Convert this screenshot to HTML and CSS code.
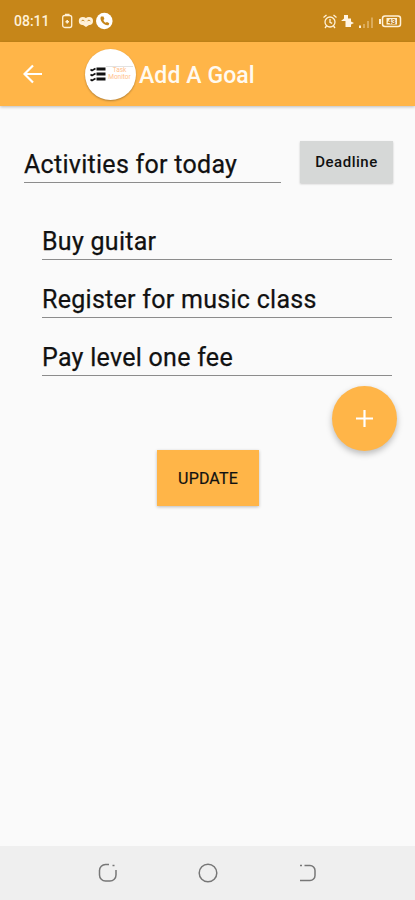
FILE: index.html
```
<!DOCTYPE html>
<html lang="en">
<head>
  <meta charset="UTF-8">
  <meta name="viewport" content="width=device-width, initial-scale=1.0">
  <title>Add A Goal</title>
  <link rel="stylesheet" href="styles.css">
</head>
<body>
  <div class="statusbar">
    <span class="clock">08:11</span>
    <svg class="status-left" width="54" height="20" viewBox="0 0 54 20">
      <rect x="2.700" y="4.500" width="9" height="12" rx="2" fill="none" stroke="#fff1d8" stroke-width="1.300"/>
      <path d="M5 3.500h4.500M7.200 9v3.500M5.500 10.700h3.500" stroke="#fff1d8" stroke-width="1.600"/>
      <circle cx="22.800" cy="10" r="4" fill="#fff1d8"/>
      <circle cx="29" cy="10" r="4" fill="#fff1d8"/>
      <path d="M20 12l6 4 6-4z" fill="#fff1d8"/>
      <path d="M21.500 10.200a1.500 1.500 0 0 1 2.800 0M27.500 10.200a1.500 1.500 0 0 1 2.800 0" fill="none" stroke="#c68619" stroke-width="1"/>
      <circle cx="44.300" cy="10" r="8.300" fill="#fff"/>
      <path d="M41 5.500c-2.200 3 2.700 9.500 7.500 8.700l.8-1.900-2.300-1.300-1.400.8c-1-.6-1.900-1.700-2.200-2.900l1-1-.9-2.400z" fill="#c68619"/>
    </svg>
    <svg class="status-right" width="84" height="20" viewBox="0 0 84 20">
      <g fill="none" stroke="#fff1d8" stroke-width="1.300">
        <circle cx="10" cy="11" r="5"/>
        <path d="M10 8v3.300l2.200 1M3.500 6.500l3-2.500M16.500 6.500l-3-2.500M6.500 15l-1.500 2M13.500 15l1.500 2"/>
      </g>
      <path d="M24 4h4v3.500h3v3l3 1.500-3 1.500V16h-5.500v-6H21l3-2.500z" fill="#fff5e5"/>
      <path d="M40 17v-2.500" stroke="#fff1d8" stroke-width="2"/>
      <path d="M44 17v-4M48 17v-7M52 17V6.500" stroke="#dbab5b" stroke-width="2"/>
      <rect x="62.500" y="5" width="18" height="10.500" rx="2.500" fill="none" stroke="#fff1d8" stroke-width="1.500"/>
      <path d="M60 8v5" stroke="#fff1d8" stroke-width="2"/>
      <rect x="66.500" y="7" width="10.500" height="6.500" fill="#fff1d8"/>
      <text x="71.700" y="13" text-anchor="middle" class="battery">43</text>
    </svg>
  </div>

  <header class="appbar">
    <svg class="back" width="20" height="20" viewBox="0 0 20 20">
      <path d="M19 10H2M10 1.500L1.500 10l8.500 8.500" fill="none" stroke="#fff" stroke-width="2.200"/>
    </svg>
    <div class="logo">
      <svg width="16" height="16" viewBox="0 0 16 16">
        <path d="M6.500 3h9M6.500 8h9M6.500 13h9" stroke="#111" stroke-width="3"/>
        <path d="M.5 3.500l1.500 1L5.500 2.500M.5 8.500l1.500 1L5.500 7.500M.5 13.500l1.500 1L5.500 12.500" fill="none" stroke="#111" stroke-width="1.600"/>
      </svg>
      <span class="logo-text">Task<br>Monitor</span>
    </div>
    <h1>Add A Goal</h1>
  </header>

  <main>
    <div class="goal-row">
      <div class="field title">Activities for today</div>
      <button class="deadline">Deadline</button>
    </div>

    <div class="activities">
      <div class="field">Buy guitar</div>
      <div class="field">Register for music class</div>
      <div class="field">Pay level one fee</div>
    </div>

    <button class="fab" aria-label="Add">
      <svg width="17" height="17" viewBox="0 0 17 17">
        <path d="M8.500 0v17M0 8.500h17" stroke="#fff" stroke-width="2.200"/>
      </svg>
    </button>
    <button class="update">UPDATE</button>
  </main>

  <nav class="navbar">
    <svg width="20" height="20" viewBox="0 0 20 20">
      <path d="M11 1.500H7.500A6 6 0 0 0 1.500 7.500v4.500A6 6 0 0 0 7.500 18h4.500a6 6 0 0 0 6-6V7M14.500 2.500h2"/>
    </svg>
    <svg width="20" height="20" viewBox="0 0 20 20">
      <circle cx="10" cy="10" r="8.800"/>
    </svg>
    <svg width="20" height="20" viewBox="0 0 20 20">
      <path d="M6.500 2.500H12a5 5 0 0 1 5 5v5a5 5 0 0 1-5 5H2M2 2.500h2"/>
    </svg>
  </nav>
</body>
</html>
```

FILE: styles.css
```
* {
  box-sizing: border-box;
}
body {
  margin: 0;
  height: 900px;
  display: flex;
  flex-direction: column;
  overflow: hidden;
  background: #fafafa;
  color: #111;
  font-family: Roboto, sans-serif;
}
button {
  border: 0;
  padding: 0;
  color: #111;
  font-family: inherit;
}
.statusbar {
  height: 42px;
  padding: 0 11px 0 14px;
  display: flex;
  align-items: center;
  background: #c68619;
  color: #fff1d8;
}
.clock {
  width: 46px;
  font-size: 14px;
  font-weight: 500;
}
.status-right {
  margin-left: auto;
}
.battery {
  font-size: 7px;
  font-weight: 700;
  fill: #b87a14;
}
.appbar {
  height: 64px;
  padding-left: 23px;
  display: flex;
  align-items: center;
  background: #ffb548;
  box-shadow: 0 1px 3px rgba(0, 0, 0, 0.25);
}
.logo {
  width: 51px;
  height: 51px;
  margin: 0 3px 0 42px;
  padding: 0 0 0 5px;
  display: flex;
  align-items: center;
  border-radius: 50%;
  background: #fff;
  box-shadow: 0 1px 2px rgba(0, 0, 0, 0.3);
}
.logo-text {
  width: 27px;
  margin-top: -2px;
  border-top: 1px solid #e2e2e2;
  font-size: 6.500px;
  line-height: 7px;
  text-align: center;
  color: #ffc08c;
}
h1 {
  margin: 2px 0 0;
  color: #fffaf0;
  font-size: 23px;
  font-weight: 500;
  letter-spacing: 0.1px;
}
main {
  flex: 1;
  padding: 35px 18px 0 24px;
  display: flex;
  flex-direction: column;
}
.goal-row {
  height: 42px;
  display: flex;
  justify-content: space-between;
  padding-right: 4px;
}
.field {
  height: 42px;
  border-bottom: 1px solid #8c8c8c;
  font-size: 25px;
  line-height: 47px;
  letter-spacing: 0.28px;
  white-space: nowrap;
  -webkit-text-stroke: 0.25px #111;
}
.title {
  width: 257px;
}
.deadline {
  width: 93px;
  height: 42px;
  background: #d6d8d7;
  font-size: 15px;
  font-weight: 500;
  letter-spacing: 0.5px;
  box-shadow: 0 1px 2px rgba(0, 0, 0, 0.2);
}
.activities {
  padding: 35px 5px 0 18px;
  display: flex;
  flex-direction: column;
  gap: 16px;
}
.fab {
  width: 65px;
  height: 65px;
  margin: 10px 0 -1px;
  align-self: flex-end;
  display: flex;
  align-items: center;
  justify-content: center;
  border-radius: 50%;
  background: #ffb548;
  box-shadow: 0 3px 6px rgba(0, 0, 0, 0.25);
}
.update {
  width: 102px;
  height: 56px;
  margin-left: 133px;
  background: #ffb548;
  font-size: 16px;
  letter-spacing: 0.15px;
  box-shadow: 0 1px 3px rgba(0, 0, 0, 0.25);
  -webkit-text-stroke: 0.2px #111;
}
.navbar {
  height: 54px;
  display: flex;
  align-items: center;
  justify-content: center;
  gap: 80px;
  background: #efefef;
}
.navbar svg {
  fill: none;
  stroke: #777;
  stroke-width: 1.5;
}
```
